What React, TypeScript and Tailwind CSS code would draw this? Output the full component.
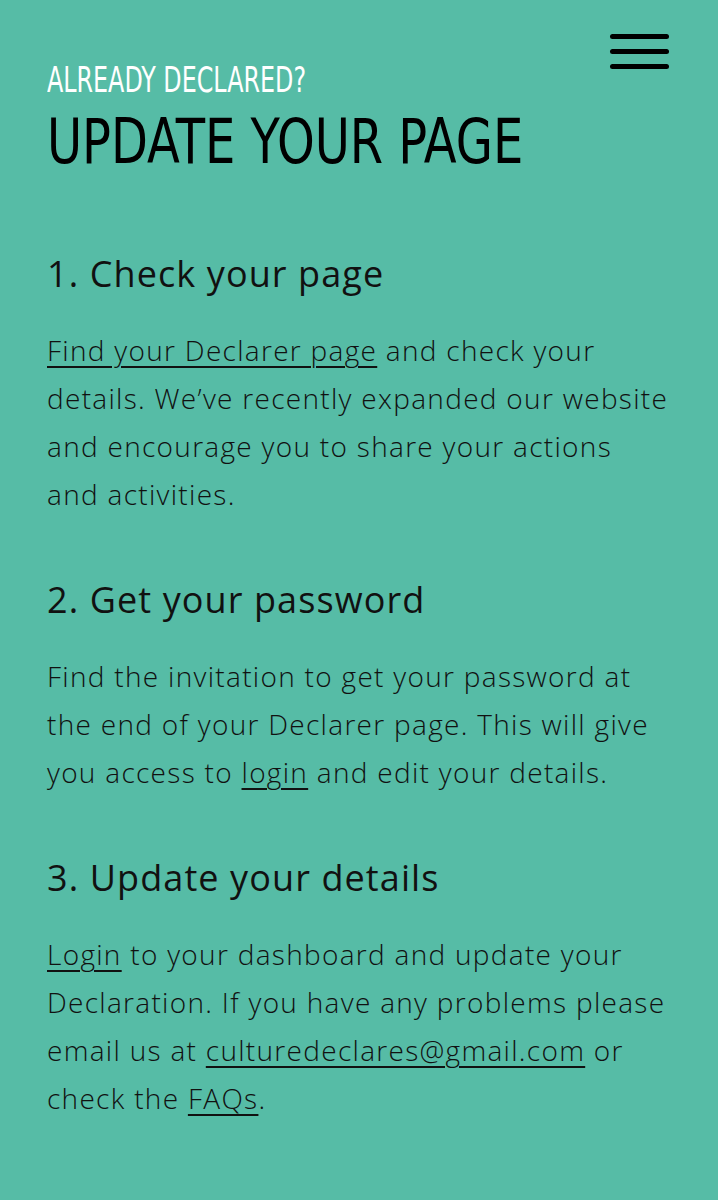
export default function App() {
  const link = "underline decoration-[2px] underline-offset-[5px]";
  return (
    <div className="w-[718px] h-[1200px] overflow-hidden bg-[#56bca6] text-[#111] relative">
      <button className="absolute top-[34px] right-[49px] w-[59px] flex flex-col gap-[10px]" aria-label="Menu">
        <span className="block h-[5px] rounded-full bg-black" />
        <span className="block h-[5px] rounded-full bg-black" />
        <span className="block h-[5px] rounded-full bg-black" />
      </button>

      <div className="pl-[47px] pr-[48px] pt-[60px]">
        <header className="font-['Liberation_Sans_Narrow','DejaVu_Sans_Condensed',sans-serif]">
          <p className="text-white text-[36px] leading-[40px] origin-left scale-x-[0.735] whitespace-nowrap">
            ALREADY DECLARED?
          </p>
          <h1 className="mt-[6px] text-black text-[62px] leading-[72px] origin-left scale-x-[0.86] whitespace-nowrap">
            UPDATE YOUR PAGE
          </h1>
        </header>

        <main className="font-['Open_Sans',sans-serif] mt-[74px]">
          <section>
            <h2 className="text-[36px] leading-[44px] font-normal tracking-[1.1px]">1. Check your page</h2>
            <p className="mt-[30px] text-[28px] leading-[48px] font-light tracking-[1.3px]">
              <a className={link}>Find your Declarer page</a> and check your details. We’ve recently expanded our website and encourage you to share your actions and activities.
            </p>
          </section>

          <section className="mt-[60px]">
            <h2 className="text-[36px] leading-[44px] font-normal tracking-[1.1px]">2. Get your password</h2>
            <p className="mt-[30px] text-[28px] leading-[48px] font-light tracking-[1.3px]">
              Find the invitation to get your password at the end of your Declarer page. This will give you access to <a className={link}>login</a> and edit your details.
            </p>
          </section>

          <section className="mt-[60px]">
            <h2 className="text-[36px] leading-[44px] font-normal tracking-[1.1px]">3. Update your details</h2>
            <p className="mt-[30px] text-[28px] leading-[48px] font-light tracking-[1.3px]">
              <a className={link}>Login</a> to your dashboard and update your Declaration. If you have any problems please email us at <a className={link}>culturedeclares@gmail.com</a> or check the <a className={link}>FAQs</a>.
            </p>
          </section>
        </main>
      </div>
    </div>
  );
}
